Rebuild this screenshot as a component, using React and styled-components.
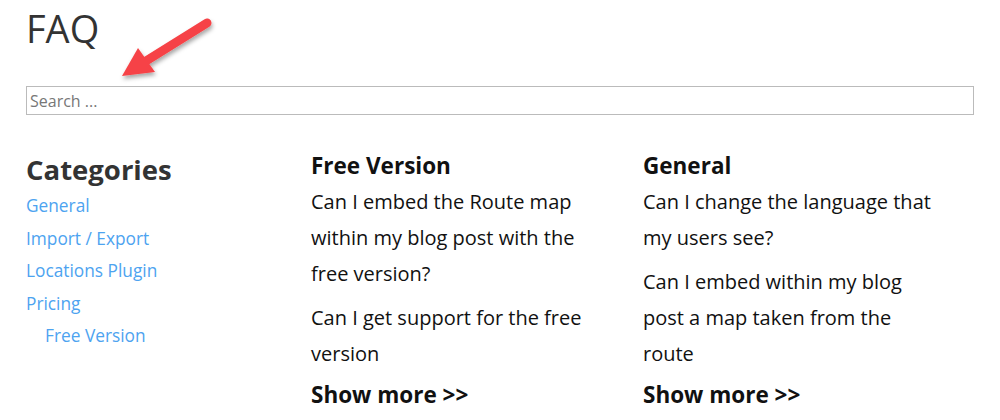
import React from "react";
import styled, { createGlobalStyle } from "styled-components";

const GlobalStyle = createGlobalStyle`
  html, body {
    margin: 0;
    padding: 0;
    background: #fff;
    font-family: "Open Sans", "Liberation Sans", sans-serif;
  }
`;

const Page = styled.div`
  position: relative;
  width: 948px;
  padding: 0 26px;
`;

const Title = styled.h1`
  margin: 0;
  padding-top: 4px;
  height: 82px;
  font-size: 38px;
  font-weight: 400;
  line-height: 48px;
  color: #333;
`;

const Search = styled.input`
  box-sizing: border-box;
  display: block;
  width: 948px;
  height: 29px;
  margin: 0;
  padding: 0 3px;
  border: 1px solid #bbb;
  font-family: inherit;
  font-size: 16px;
  color: #333;
  outline: none;

  &::placeholder {
    color: #777;
  }
`;

const Grid = styled.div`
  display: grid;
  grid-template-columns: 285px 332px 331px;
  margin-top: 34px;
`;

const Sidebar = styled.div`
  display: flex;
  flex-direction: column;
  padding-top: 1px;
`;

const SideTitle = styled.h2`
  margin: 0;
  font-size: 27.5px;
  font-weight: 700;
  line-height: 40px;
  color: #333;
`;

const CatLink = styled.a`
  display: block;
  padding-left: ${(p) => (p.$sub ? "19px" : "0")};
  font-size: 17.3px;
  line-height: 32.5px;
  color: #4da3f0;
  text-decoration: none;
`;

const Column = styled.div`
  width: 298px;
  padding-top: 1px;
`;

const ColTitle = styled.h3`
  margin: 0 0 2px;
  font-size: 22.5px;
  font-weight: 700;
  line-height: 32px;
  color: #111;
`;

const Question = styled.div`
  margin-bottom: 8px;
  font-size: 20px;
  line-height: 36px;
  color: #111;
`;

const ShowMore = styled.div`
  margin-top: -1px;
  font-size: 22.5px;
  font-weight: 700;
  line-height: 32px;
  color: #111;
`;

const Arrow = styled.svg`
  position: absolute;
  left: 112px;
  top: 12px;
  overflow: visible;
`;

const categories = [
  { name: "General" },
  { name: "Import / Export" },
  { name: "Locations Plugin" },
  { name: "Pricing" },
  { name: "Free Version", sub: true },
];

const columns = [
  {
    title: "Free Version",
    questions: [
      "Can I embed the Route map within my blog post with the free version?",
      "Can I get support for the free version",
    ],
  },
  {
    title: "General",
    questions: [
      "Can I change the language that my users see?",
      "Can I embed within my blog post a map taken from the route",
    ],
  },
];

const App = () => (
  <>
    <GlobalStyle />
    <Page>
      <Title>FAQ</Title>
      <Search placeholder="Search ..." />
      <Grid>
        <Sidebar>
          <SideTitle>Categories</SideTitle>
          {categories.map((c, i) => (
            <CatLink key={i} href="#" $sub={c.sub}>
              {c.name}
            </CatLink>
          ))}
        </Sidebar>
        {columns.map((col, i) => (
          <Column key={i}>
            <ColTitle>{col.title}</ColTitle>
            {col.questions.map((q, j) => (
              <Question key={j}>{q}</Question>
            ))}
            <ShowMore>Show more &gt;&gt;</ShowMore>
          </Column>
        ))}
      </Grid>
      <Arrow width="110" height="75" viewBox="0 0 110 75">
        <defs>
          <filter id="sh" x="-20%" y="-20%" width="150%" height="160%">
            <feDropShadow dx="1" dy="3" stdDeviation="2" floodColor="#000" floodOpacity="0.35" />
          </filter>
        </defs>
        <g filter="url(#sh)">
          <line x1="95" y1="11" x2="34" y2="49" stroke="#f64346" strokeWidth="9" strokeLinecap="round" />
          <polygon points="10,64 26,36 43,60" fill="#f64346" />
        </g>
      </Arrow>
    </Page>
  </>
);

export default App;
